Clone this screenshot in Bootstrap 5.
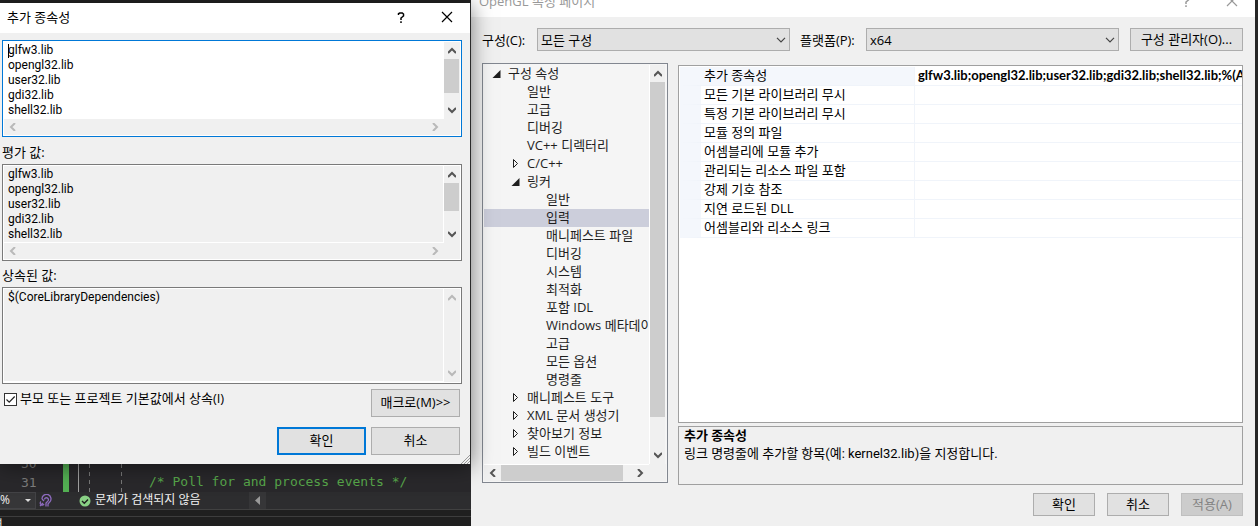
<!DOCTYPE html>
<html lang="ko">
<head>
<meta charset="utf-8">
<meta name="viewport" content="width=device-width, initial-scale=1">
<title>OpenGL 속성 페이지</title>
<link rel="stylesheet" href="https://cdn.jsdelivr.net/npm/bootstrap@5.3.0/dist/css/bootstrap.min.css">
<style>
:root { --face: #f0f0f0; --thumb: #cdcdcd; --line: #a0a0a0; }
body { font: 13px/18px "Open Sans", "Noto Sans CJK KR", sans-serif; color: #000; background: #232323; }
.desktop { display: grid; grid-template-columns: minmax(0, 471fr) minmax(0, 787fr); overflow: hidden; }
svg { display: block; fill: none; stroke: currentColor; }

/* windows */
.dialog-win { position: relative; z-index: 2; margin-top: 3px; background: var(--face); box-shadow: 0 2px 20px rgba(0,0,0,.5); border-right: 1px solid #2a2a2a; }
.title-bar { height: 30px; background: #fff; padding: 0 17px 2px 7px; }
.title-bar button, .scroll-bar button { border: 0; padding: 0; background: none; color: inherit; }
.props-win { background: var(--face); border-right: 3px solid #262626; border-left: 0; }
.props-title { margin-top: -13px; color: #999; padding: 0 17px 2px 8px; }
.push { height: 28px; padding: 0 0 2px; border: 1px solid #adadad; border-radius: 0; background: #e1e1e1; font-size: 13px; line-height: 18px; color: #000; }
.push.w-dialog { width: 89px; }
.push.w-props { width: 62px; height: 23px; }
.push.w-manager { width: 113px; height: 23px; margin-left: 11px; }
.push.primary { border: 2px solid #0078d7; }
.push:disabled { background: #ccc; border-color: #bfbfbf; color: #838383; opacity: 1; }

/* edit boxes */
.dialog-body { padding: 7px 8px 9px 2px; }
.edit-box { position: relative; display: grid; grid-template-columns: minmax(0, 1fr) 16px; grid-template-rows: 1fr 16px; height: 97px; padding: 1px; border: 1px solid #7a7a7a; background: var(--face); box-shadow: inset 0 0 0 1px #fff; }
.edit-box.active { border-color: #0078d7; }
.edit-box.active textarea { background: #fff; border-color: #fff; }
.edit-box.single { grid-template-rows: 1fr; }
.edit-box textarea { resize: none; border: 0 solid #fff; border-width: 0 1px 1px 0; border-radius: 0; padding: 1px 4px; background: transparent; font-family: Roboto, "Noto Sans CJK KR", sans-serif; font-size: 12px; line-height: 15px; color: #000; overflow: hidden; white-space: pre; outline: 0; }
.caret-bar { position: absolute; left: 5px; top: 3px; width: 1px; height: 14px; background: #000; }
.field-label { height: 27px; padding-top: 6px; }
.field-label.low { height: 26px; padding-top: 5px; }
.check-row { margin-top: 5px; }
.dialog-buttons { margin-top: 10px; gap: 5px; }
.check-row, .dialog-buttons { padding-right: 2px; }
.check-row label { padding-bottom: 1px; }
.check { appearance: none; width: 13px; height: 13px; margin: 1px 3px 0 2px; border: 1px solid #333; background: #fff url("data:image/svg+xml,%3Csvg xmlns='http://www.w3.org/2000/svg' viewBox='0 0 11 11'%3E%3Cpath d='M1.5 5.5l2.7 2.7L9.7 2.5' fill='none' stroke='%23222' stroke-width='1.2'/%3E%3C/svg%3E"); }
.grip { position: absolute; right: 0; bottom: 0; color: #999; }

/* scroll bars */
.scroll-bar { display: flex; color: #555; background: var(--face); }
.scroll-bar.v { flex-direction: column; width: 15px; }
.scroll-bar button { flex: 0 0 17px; display: flex; align-items: center; justify-content: center; }
.scroll-bar.off { color: #b9b9b9; }
.scroll-bar svg { stroke-width: 2; }
.thumb { background: var(--thumb); }
.room { flex: 1; }

/* editor behind the dialog */
.editor { background: #29282b; color: #57a64a; height: 62px; }
.code-view { height: 28px; padding-left: 21px; overflow: hidden; font: 13px/19px "DejaVu Sans Mono", monospace; color: #57a64a; }
.code-view .lines { width: 42px; margin-top: -10px; color: #7c7c7c; }
.change-bar { width: 6px; background: #53b053; margin-right: 9px; }
.outline-bar { width: 1px; background: #a0a0a0; margin-right: 10px; }
.guide { width: 1px; margin-right: 31px; background: repeating-linear-gradient(#777 0 4px, transparent 4px 8px); }
.code-line { margin-top: 8px; margin-left: -4px; font: inherit; color: inherit; white-space: pre; }
.status-row { height: 17px; background: #2d2d2f; color: #f1f1f1; font-size: 12px; }
.status-row span { padding-bottom: 2px; }
.zoom-box { width: 36px; height: 17px; background: #363638; border: 1px solid #434346; border-left: 0; }
.assist { margin: 0 27px 0 3px; color: #8e6bbf; }
.back-tab { margin-left: 48px; }
.dock { height: 17px; background: #1f1f1f; border-top: 1px solid #414141; color: #ddd; }
.dock div { margin-top: 6px; border-top: 1px solid #3d3d3d; height: 10px; overflow: hidden; text-indent: -9px; line-height: 14px; }

/* property pages */
.props-body { padding: 11px 12px 9px 11px; }
.combo { border: 1px solid #adadad; border-radius: 0; height: 23px; padding: 0 24px 0 3px; font-size: 13px; line-height: 20px; color: #000; background-color: #e1e1e1; background-size: 10px 6px; background-position: right 3px center; background-image: url("data:image/svg+xml,%3Csvg xmlns='http://www.w3.org/2000/svg' viewBox='0 0 10 6'%3E%3Cpath d='M1 .8l4 4 4-4' fill='none' stroke='%23444' stroke-width='1.2'/%3E%3C/svg%3E"); }
.config-row label { flex: none; width: 55px; }
.config-row label + select + label { width: 76px; padding-left: 10px; }
.tree-box { flex: 0 0 186px; height: 420px; padding: 1px; border: 1px solid #828790; background: #f5f5f5; display: grid; grid-template-columns: minmax(0, 1fr) 17px; grid-template-rows: minmax(0, 1fr) 17px; }
.tree-box .scroll-bar.v { margin-left: 1px; }
.tree-list { border-right: 1px solid #fff; margin-right: -1px; overflow: hidden; white-space: nowrap; color: #1e1e1e; }
.tree-list li { display: flex; align-items: center; height: 18px; padding-bottom: 2px; }
.tree-list li svg { width: 10px; height: 10px; }
.slot { flex: 0 0 16px; padding-top: 2px; }
.lv1 { padding-left: 8px; } .lv2 { padding-left: 27px; } .lv3 { padding-left: 46px; }
.picked { background: #cccedb; }
.right-pane { min-width: 0; margin: 2px 0 0 10px; }
.grid-box { height: 358px; border: 1px solid var(--line); background: #fff; padding: 1px 0 1px 1px; overflow: hidden; }
.prop-grid { width: 100%; table-layout: fixed; border-collapse: separate; border-spacing: 0; white-space: nowrap; }
.prop-grid th, .prop-grid td { height: 19px; padding: 0 0 2px 3px; line-height: 16px; border-bottom: 1px solid #f0f4fa; overflow: hidden; }
.prop-grid th { font-weight: 400; border-right: 1px solid #f0f4fa; border-left: 21px solid #f4f7fc; width: 235px; }
.prop-grid td { font-family: Lato, "Noto Sans CJK KR", sans-serif; font-weight: 700; }
.prop-grid .current { background: #f4f7fc; }
.hint-box { height: 59px; margin-top: 3px; padding: 0 5px; border: 1px solid var(--line); font-family: Roboto, "Noto Sans CJK KR", sans-serif; }
</style>
</head>
<body>
<main class="desktop min-vh-100">
  <div class="d-flex flex-column">
    <section class="dialog-win" aria-label="추가 종속성">
      <header class="title-bar d-flex align-items-center">
        <span class="me-auto">추가 종속성</span>
        <button type="button" class="me-4 px-2" aria-label="도움말"><svg width="8" height="11" stroke-width="1.5"><path d="M1.5 3V1.7L2.7 1h2.6l1.2 1v2L4 6v2M4 9.2V11"/></svg></button>
        <button type="button" class="ms-1" aria-label="닫기"><svg width="12" height="12" stroke-width="1.2"><path d="M1 1l10 10M11 1L1 11"/></svg></button>
      </header>
      <form class="dialog-body">
        <div class="edit-box active">
          <textarea aria-label="추가 종속성" spellcheck="false">glfw3.lib
opengl32.lib
user32.lib
gdi32.lib
shell32.lib</textarea>
          <div class="scroll-bar v">
            <button type="button" aria-label="위로"><svg width="8" height="7"><path d="M0 6l4-4 4 4"/></svg></button>
            <div class="thumb" style="height:34px"></div><div class="room"></div>
            <button type="button" aria-label="아래로"><svg width="8" height="7"><path d="M0 1l4 4 4-4"/></svg></button>
          </div>
          <div class="scroll-bar off">
            <button type="button" aria-label="왼쪽"><svg width="7" height="8"><path d="M6 0L2 4l4 4"/></svg></button>
            <div class="room"></div>
            <button type="button" aria-label="오른쪽"><svg width="7" height="8"><path d="M1 0l4 4-4 4"/></svg></button>
          </div>
          <span class="caret-bar"></span>
        </div>
        <label class="field-label d-block" for="evaluated">평가 값:</label>
        <div class="edit-box">
          <textarea id="evaluated" readonly spellcheck="false">glfw3.lib
opengl32.lib
user32.lib
gdi32.lib
shell32.lib</textarea>
          <div class="scroll-bar v">
            <button type="button" aria-label="위로"><svg width="8" height="7"><path d="M0 6l4-4 4 4"/></svg></button>
            <div class="thumb" style="height:28px"></div><div class="room"></div>
            <button type="button" aria-label="아래로"><svg width="8" height="7"><path d="M0 1l4 4 4-4"/></svg></button>
          </div>
          <div class="scroll-bar off">
            <button type="button" aria-label="왼쪽"><svg width="7" height="8"><path d="M6 0L2 4l4 4"/></svg></button>
            <div class="room"></div>
            <button type="button" aria-label="오른쪽"><svg width="7" height="8"><path d="M1 0l4 4-4 4"/></svg></button>
          </div>
        </div>
        <label class="field-label low d-block" for="inherited">상속된 값:</label>
        <div class="edit-box single">
          <textarea id="inherited" readonly spellcheck="false">$(CoreLibraryDependencies)</textarea>
          <div class="scroll-bar v off">
            <button type="button" aria-label="위로"><svg width="8" height="7"><path d="M0 6l4-4 4 4"/></svg></button>
            <div class="room"></div>
            <button type="button" aria-label="아래로"><svg width="8" height="7"><path d="M0 1l4 4 4-4"/></svg></button>
          </div>
        </div>
        <div class="check-row d-flex align-items-start justify-content-between">
          <div class="d-flex align-items-center"><input class="check" type="checkbox" id="inherit" checked><label for="inherit">부모 또는 프로젝트 기본값에서 상속(I)</label></div>
          <button type="button" class="push w-dialog">매크로(M)&gt;&gt;</button>
        </div>
        <div class="dialog-buttons d-flex justify-content-end">
          <button type="button" class="push primary w-dialog">확인</button>
          <button type="button" class="push w-dialog">취소</button>
        </div>
      </form>
      <svg class="grip" width="9" height="9" aria-hidden="true"><path d="M0 9L9 0M3 9l6-6M6 9l3-3"/></svg>
    </section>
    <section class="editor flex-fill" aria-label="편집기">
      <div class="code-view d-flex">
        <div class="lines">30<br>31</div>
        <div class="change-bar"></div><div class="outline-bar"></div><div class="guide"></div><div class="guide"></div>
        <code class="code-line">/* Poll for and process events */</code>
      </div>
      <div class="status-row d-flex align-items-center">
        <div class="zoom-box d-flex align-items-center justify-content-between pe-1"><span>%</span><svg width="6" height="3"><path d="M0 0h6L3 3z" fill="#ddd" stroke="none"/></svg></div>
        <svg class="assist" width="13" height="13" viewBox="0 0 13 13" stroke-width="1.3" aria-hidden="true"><path d="M3 5a4.500 4.500 0 1 1 7.500 3.200L9 10v2.500M5.500 5.500a2 2 0 1 1 3 2L7 9v3.500M3 5l2 2"/><path d="M1 12l3-3M2 7.500a2 2 0 1 0 3 2.500"/></svg>
        <svg class="me-1" width="12" height="12" aria-hidden="true"><circle cx="6" cy="6" r="5.5" fill="#89d185" stroke="none"/><path d="M3 6l2.3 2.3L9 4.5" stroke="#1e1e1e" stroke-width="1.4"/></svg>
        <span>문제가 검색되지 않음</span>
        <svg class="back-tab" width="17" height="17" aria-hidden="true"><path d="M0 0h17v17H0z" fill="#363638" stroke="none"/><path d="M11 4v9L6 8.500z" fill="#999" stroke="none"/></svg>
      </div>
      <div class="dock"><div>력</div></div>
    </section>
  </div>

  <section class="props-win" aria-label="OpenGL 속성 페이지">
    <header class="title-bar props-title d-flex align-items-center">
      <span class="me-auto">OpenGL 속성 페이지</span>
      <button type="button" class="me-4 px-2" aria-label="도움말"><svg width="8" height="11" stroke-width="1.5"><path d="M1.500 3V1.700L2.700 1h2.600l1.200 1v2L4 6v2M4 9.200V11"/></svg></button>
      <button type="button" class="ms-1" aria-label="닫기"><svg width="12" height="12" stroke-width="1.200"><path d="M1 1l10 10M11 1L1 11"/></svg></button>
    </header>
    <div class="props-body">
      <div class="config-row d-flex align-items-center">
        <label for="config">구성(C):</label>
        <select id="config" class="form-select combo"><option>모든 구성</option></select>
        <label for="platform">플랫폼(P):</label>
        <select id="platform" class="form-select combo"><option>x64</option></select>
        <button type="button" class="push w-manager flex-shrink-0">구성 관리자(O)...</button>
      </div>
      <div class="d-flex pt-1 mt-2">
        <div class="tree-box">
          <ul class="tree-list list-unstyled mb-0" role="tree" id="tree"></ul>
          <div class="scroll-bar v">
            <button type="button" aria-label="위로"><svg width="8" height="7"><path d="M0 6l4-4 4 4"/></svg></button>
            <div class="thumb" style="height:335px"></div><div class="room"></div>
            <button type="button" aria-label="아래로"><svg width="8" height="7"><path d="M0 1l4 4 4-4"/></svg></button>
          </div>
          <div class="scroll-bar border-top border-white">
            <button type="button" aria-label="왼쪽"><svg width="7" height="8"><path d="M6 0L2 4l4 4"/></svg></button>
            <div class="thumb" style="width:122px"></div><div class="room"></div>
            <button type="button" aria-label="오른쪽"><svg width="7" height="8"><path d="M1 0l4 4-4 4"/></svg></button>
          </div>
          <div class="scroll-bar"></div>
        </div>
        <div class="right-pane flex-fill">
          <div class="grid-box">
            <table class="prop-grid">
              <tbody>
                <tr><th scope="row" class="current">추가 종속성</th><td>glfw3.lib;opengl32.lib;user32.lib;gdi32.lib;shell32.lib;%(AdditionalDependencies)</td></tr>
                <tr><th scope="row">모든 기본 라이브러리 무시</th><td></td></tr>
                <tr><th scope="row">특정 기본 라이브러리 무시</th><td></td></tr>
                <tr><th scope="row">모듈 정의 파일</th><td></td></tr>
                <tr><th scope="row">어셈블리에 모듈 추가</th><td></td></tr>
                <tr><th scope="row">관리되는 리소스 파일 포함</th><td></td></tr>
                <tr><th scope="row">강제 기호 참조</th><td></td></tr>
                <tr><th scope="row">지연 로드된 DLL</th><td></td></tr>
                <tr><th scope="row">어셈블리와 리소스 링크</th><td></td></tr>
              </tbody>
            </table>
          </div>
          <div class="hint-box"><strong class="d-block">추가 종속성</strong>링크 명령줄에 추가할 항목(예: kernel32.lib)을 지정합니다.</div>
        </div>
      </div>
      <div class="d-flex justify-content-end mt-2" style="gap:12px">
        <button type="button" class="push w-props">확인</button>
        <button type="button" class="push w-props">취소</button>
        <button type="button" class="push w-props" disabled>적용(A)</button>
      </div>
    </div>
  </section>
</main>
<script src="https://cdn.jsdelivr.net/npm/bootstrap@5.3.0/dist/js/bootstrap.bundle.min.js"></script>
<script>
const open = '<svg><path d="M8.500 1v8h-8z" fill="#1e1e1e" stroke="none"/></svg>';
const shut = '<svg><path d="M2.500 .5v8L6.500 4.500z"/></svg>';
const nodes = [
  [1, '구성 속성', open], [2, '일반'], [2, '고급'], [2, '디버깅'], [2, 'VC++ 디렉터리'], [2, 'C/C++', shut], [2, '링커', open],
  [3, '일반'], [3, '입력'], [3, '매니페스트 파일'], [3, '디버깅'], [3, '시스템'], [3, '최적화'], [3, '포함 IDL'],
  [3, 'Windows 메타데이터'], [3, '고급'], [3, '모든 옵션'], [3, '명령줄'],
  [2, '매니페스트 도구', shut], [2, 'XML 문서 생성기', shut], [2, '찾아보기 정보', shut], [2, '빌드 이벤트', shut]
];
document.getElementById('tree').innerHTML = nodes.map(([level, name, icon = '']) =>
  `<li role="treeitem" class="lv${level}${name === '입력' ? ' picked' : ''}"><span class="slot">${icon}</span>${name}</li>`).join('');
</script>
</body>
</html>
